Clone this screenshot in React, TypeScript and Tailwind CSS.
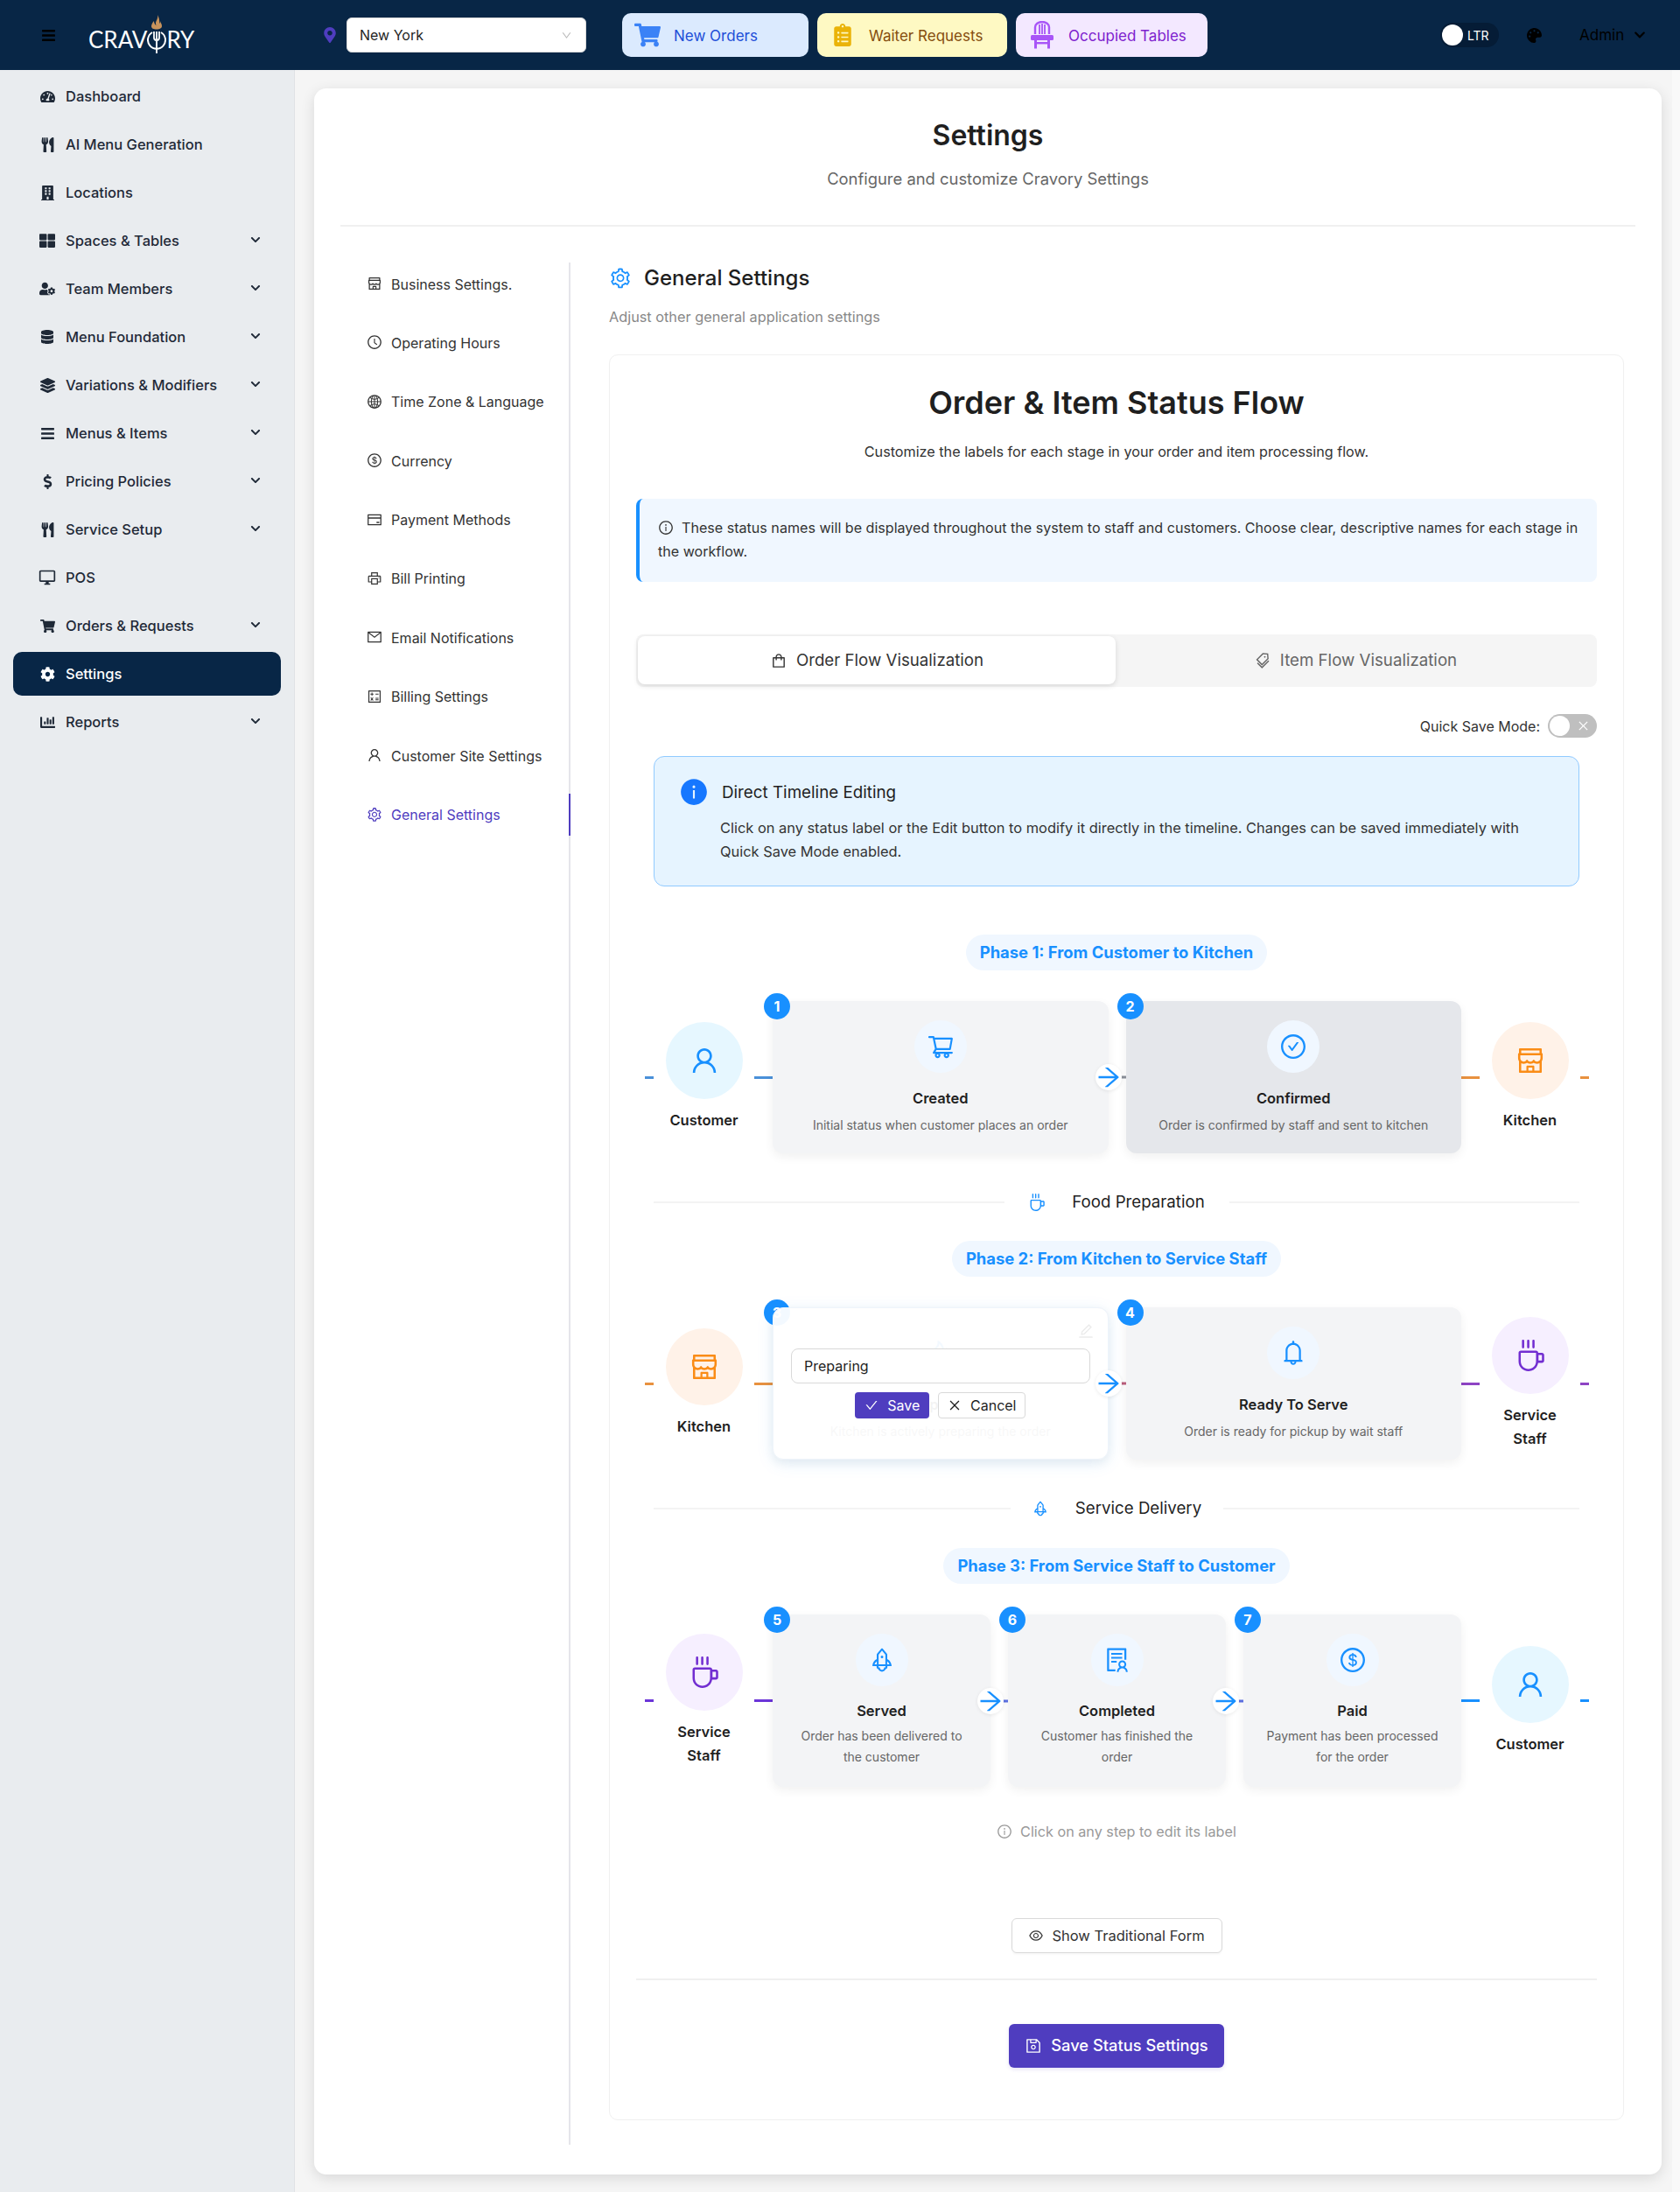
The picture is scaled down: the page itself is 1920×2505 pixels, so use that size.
import React from "react";
import {
  FaTachometerAlt, FaUtensils, FaBuilding, FaThLarge, FaUserCog, FaDatabase, FaLayerGroup, FaBars,
  FaDollarSign, FaShoppingCart, FaCog, FaChartBar, FaPalette, FaMapMarkerAlt, FaClipboardList, FaChevronDown,
} from "react-icons/fa";
import { MdOutlineDesktopWindows } from "react-icons/md";
import {
  AiOutlineShop, AiOutlineClockCircle, AiOutlineGlobal, AiOutlineDollarCircle, AiOutlineCreditCard, AiOutlinePrinter,
  AiOutlineMail, AiOutlineCalculator, AiOutlineUser, AiOutlineSetting, AiOutlineShopping, AiOutlineTags, AiOutlineInfoCircle,
  AiFillInfoCircle, AiOutlineShoppingCart, AiOutlineCheckCircle, AiOutlineCoffee, AiOutlineRocket, AiOutlineBell, AiOutlineSolution,
  AiOutlineDollar, AiOutlineArrowRight, AiOutlineEye, AiOutlineSave, AiOutlineCheck, AiOutlineClose, AiOutlineEdit, AiOutlineFire,
} from "react-icons/ai";
import { AiOutlineDown } from "react-icons/ai";

const sideItems: [React.ReactNode, string, boolean][] = [
  [<FaTachometerAlt size={17} />, "Dashboard", false],
  [<FaUtensils size={17} />, "AI Menu Generation", false],
  [<FaBuilding size={17} />, "Locations", false],
  [<FaThLarge size={18} />, "Spaces & Tables", true],
  [<FaUserCog size={18} />, "Team Members", true],
  [<FaDatabase size={16} />, "Menu Foundation", true],
  [<FaLayerGroup size={17} />, "Variations & Modifiers", true],
  [<FaBars size={17} />, "Menus & Items", true],
  [<FaDollarSign size={17} />, "Pricing Policies", true],
  [<FaUtensils size={17} />, "Service Setup", true],
  [<MdOutlineDesktopWindows size={20} />, "POS", false],
  [<FaShoppingCart size={17} />, "Orders & Requests", true],
  [<FaCog size={17} />, "Settings", false],
  [<FaChartBar size={17} />, "Reports", true],
];

const menuItems: [React.ReactNode, string][] = [
  [<AiOutlineShop size={18} />, "Business Settings."],
  [<AiOutlineClockCircle size={18} />, "Operating Hours"],
  [<AiOutlineGlobal size={18} />, "Time Zone & Language"],
  [<AiOutlineDollarCircle size={18} />, "Currency"],
  [<AiOutlineCreditCard size={18} />, "Payment Methods"],
  [<AiOutlinePrinter size={18} />, "Bill Printing"],
  [<AiOutlineMail size={18} />, "Email Notifications"],
  [<AiOutlineCalculator size={18} />, "Billing Settings"],
  [<AiOutlineUser size={18} />, "Customer Site Settings"],
  [<AiOutlineSetting size={18} />, "General Settings"],
];

function ChairIcon() {
  return (
    <svg width="28" height="32" viewBox="0 0 28 32" fill="none">
      <path d="M6 15V7a8 6 0 0 1 16 0v8" stroke="#a855f7" strokeWidth="2.4" />
      <path d="M11 15V4M14 15V3M17 15V4" stroke="#a855f7" strokeWidth="1.8" />
      <rect x="1" y="16" width="26" height="6" rx="1.5" fill="#a855f7" />
      <path d="M5 22h3v9.500H5zM20 22h3v9.500h-3z" fill="#a855f7" />
      <rect x="5" y="24" width="18" height="2.400" fill="#a855f7" />
    </svg>
  );
}

function LogoMark() {
  return (
    <svg width="22" height="44" viewBox="0 0 22 44" fill="none" className="mt-[-3px] shrink-0">
      <path d="M12 0c1 4-1.500 6-2 9-.2 1 .1 2 .5 3C9 11 8 9.500 8 7 6 9 5 11.500 5 13c0 2.500 2.500 3.500 6 3.500s6-1.200 6-3.700c0-2.500-1.500-3.800-2-5.800 0 1.500-.5 2.500-1 3C14.500 7 14 3 12 0z" fill="#c8935c" />
      <path d="M6 20a10 10 0 1 0 10 0" stroke="#fff" strokeWidth="2" />
      <path d="M8 19v7a3 3 0 0 0 6 0v-7M11 19v25" stroke="#fff" strokeWidth="1.800" />
    </svg>
  );
}

type End = { label: string[]; icon: React.ReactNode; bg: string };
type Step = { n: number; title: string; desc: string[]; icon: React.ReactNode; bg?: string; editing?: boolean };

const userIcon = <AiOutlineUser size={36} className="text-[#1890ff]" />;
const shopIcon = <AiOutlineShop size={36} className="text-[#fa8c16]" />;
const cupIcon = <AiOutlineCoffee size={36} className="text-[#722ed1]" />;

const customer: End = { label: ["Customer"], icon: userIcon, bg: "bg-[#e6f7ff]" };
const kitchen: End = { label: ["Kitchen"], icon: shopIcon, bg: "bg-[#fff2e8]" };
const service: End = { label: ["Service", "Staff"], icon: cupIcon, bg: "bg-[#f6efff]" };

function Endpoint({ end, c1, c2, side }: { end: End; c1: string; c2: string; side: "left" | "right" }) {
  const short = <div className={`h-[3px] w-[10px] ${c1}`} />;
  const long = <div className={`h-[3px] w-[21px] ${c2}`} />;
  return (
    <div className="flex w-[146px] shrink-0 items-center">
      {side === "left" ? short : long}
      <div className="flex w-[115px] flex-col items-center">
        <div className={`flex h-[88px] w-[88px] items-center justify-center rounded-full ${end.bg}`}>{end.icon}</div>
        <div className="mt-[11px] text-center text-[16.5px] font-semibold leading-[27px] text-[#1f1f1f]">
          {end.label.map((l) => (
            <div key={l}>{l}</div>
          ))}
        </div>
      </div>
      {side === "left" ? long : short}
    </div>
  );
}

function Card({ step, arrow, conn }: { step: Step; arrow: boolean; conn: string }) {
  const two = step.desc.length > 1;
  return (
    <div className={`relative flex-1 rounded-[12px] px-[20px] pt-[22px] shadow-[0_4px_12px_rgba(0,0,0,0.06)] ${step.bg ?? "bg-[#f3f4f6]"}`}>
      <div className="absolute left-[-10px] top-[-9px] flex h-[30px] w-[30px] items-center justify-center rounded-full bg-[#1890ff] text-[16px] font-bold text-white">
        {step.n}
      </div>
      <div className="flex flex-col items-center text-center">
        <div className="flex h-[60px] w-[60px] items-center justify-center rounded-full bg-[#f0f7ff] text-[#1890ff]">{step.icon}</div>
        <div className={`text-[16.5px] font-semibold leading-[26px] text-[#1f1f1f] ${two ? "mt-[15px]" : "mt-[16px]"}`}>{step.title}</div>
        <div className={`text-[14px] leading-[24px] text-[#666] ${two ? "mt-[4px]" : "mt-[6px]"}`}>
          {step.desc.map((d) => (
            <div key={d}>{d}</div>
          ))}
        </div>
      </div>
      {step.editing && (
        <div className="absolute inset-0 z-10 rounded-[12px] border border-[#eef4fb] bg-white/95 shadow-[0_4px_20px_rgba(24,144,255,0.1)]">
          <AiOutlineEdit size={20} className="absolute right-[15px] top-[16px] text-[#ececec]" />
          <div className="absolute left-[20px] right-[20px] top-[46px] flex h-[40px] items-center rounded-[8px] border border-[#d9d9d9] bg-white pl-[14px] text-[16px] text-[#1f1f1f]">
            Preparing
          </div>
          <div className="absolute left-0 right-0 top-[96px] flex justify-center gap-[10px]">
            <div className="flex h-[30px] w-[85px] items-center justify-center gap-[10px] rounded-[4px] bg-[#4f3dbf] text-[16px] text-white">
              <AiOutlineCheck size={16} />
              Save
            </div>
            <div className="flex h-[30px] w-[100px] items-center justify-center gap-[10px] rounded-[4px] border border-[#d9d9d9] bg-white text-[16px] text-[#1f1f1f]">
              <AiOutlineClose size={16} />
              Cancel
            </div>
          </div>
        </div>
      )}
      {arrow && (
        <>
          <div className={`absolute right-[-20px] top-1/2 z-20 h-[3px] w-[6px] -translate-y-1/2 ${conn}`} />
          <div className="absolute right-[-15px] top-1/2 z-20 flex h-[30px] w-[30px] -translate-y-1/2 items-center justify-center rounded-full bg-white text-[#1890ff] shadow-[0_1px_4px_rgba(0,0,0,0.08)]">
            <AiOutlineArrowRight size={32} className="shrink-0" />
          </div>
        </>
      )}
    </div>
  );
}

function Row({
  left, right, steps, h, lc, rc, conn, className,
}: {
  left: End; right: End; steps: Step[]; h: string; lc: [string, string]; rc: [string, string]; conn: string; className: string;
}) {
  return (
    <div className={`ml-[10px] flex w-[1079px] items-center ${className}`}>
      <Endpoint end={left} c1={lc[0]} c2={lc[1]} side="left" />
      <div className={`flex flex-1 gap-[20px] ${h}`}>
        {steps.map((s, i) => (
          <Card key={s.n} step={s} arrow={i < steps.length - 1} conn={conn} />
        ))}
      </div>
      <Endpoint end={right} c1={rc[1]} c2={rc[0]} side="right" />
    </div>
  );
}

function Pill({ children, className }: { children: string; className: string }) {
  return (
    <div className={`flex justify-center ${className}`}>
      <div className="flex h-[41px] items-center rounded-full bg-[#f0f7ff] px-[16px] text-[18.4px] font-bold text-[#1890ff]">{children}</div>
    </div>
  );
}

function Divider({ icon, label, className, w }: { icon: React.ReactNode; label: string; className: string; w: string }) {
  return (
    <div className={`mx-[20px] flex items-center ${className}`}>
      <div className="h-[2px] flex-1 bg-[#f3f3f3]" />
      <div className={`flex items-center justify-center gap-[30px] text-[18.7px] text-[#1f1f1f] ${w}`}>
        <span className="text-[#1890ff]">{icon}</span>
        {label}
      </div>
      <div className="h-[2px] flex-1 bg-[#f3f3f3]" />
    </div>
  );
}

export default function App() {
  return (
    <div className="h-[2505px] w-[1920px] overflow-hidden bg-[#f5f5f5] font-[Inter,sans-serif] text-[#1f1f1f]">
      <header className="flex h-[80px] items-center bg-[#082646]">
        <FaBars size={17} className="ml-[47px] text-black" />
        <div className="ml-[37px] flex h-[80px] w-[122px] items-center font-[Lato,sans-serif] text-[26px] font-normal leading-none text-white">
          <span className="mt-[10px]">CRAV</span>
          <LogoMark />
          <span className="mt-[10px]">RY</span>
        </div>
        <FaMapMarkerAlt size={18} className="ml-[145px] text-[#4f3dbf]" />
        <div className="ml-[10px] flex h-[40px] w-[274px] items-center justify-between rounded-[6px] border border-[#d9d9d9] bg-white pl-[14px] pr-[15px] text-[16px] text-[#1f1f1f]">
          New York
          <AiOutlineDown size={13} className="text-[#bbb]" />
        </div>
        <div className="ml-[41px] flex h-[50px] w-[213px] items-center gap-[15px] rounded-[10px] bg-[#dbeafe] pl-[14px] text-[17px] text-[#1d4ed8]">
          <FaShoppingCart size={30} className="text-[#3b82f6]" />
          <span className="pt-[3px]">New Orders</span>
        </div>
        <div className="ml-[10px] flex h-[50px] w-[217px] items-center gap-[17px] rounded-[10px] bg-[#fef9c3] pl-[16px] text-[17px] text-[#854d0e]">
          <FaClipboardList size={26} className="text-[#eab308]" />
          <span className="pt-[3px]">Waiter Requests</span>
        </div>
        <div className="ml-[10px] flex h-[50px] w-[219px] items-center gap-[16px] rounded-[10px] bg-[#f3e8ff] pl-[16px] text-[17px] text-[#7e22ce]">
          <ChairIcon />
          <span className="pt-[3px]">Occupied Tables</span>
        </div>
        <div className="ml-[266px] flex h-[28px] w-[67px] items-center gap-[5px] rounded-full bg-[#051c36] pl-[2px] text-[14px] text-white">
          <div className="h-[24px] w-[24px] rounded-full bg-white" />
          LTR
        </div>
        <FaPalette size={17} className="ml-[32px] text-black" />
        <div className="ml-[43px] pt-[2px] text-[17px] text-black">Admin</div>
        <FaChevronDown size={14} className="ml-[11px] text-black" />
      </header>

      <div className="flex h-[2425px]">
        <aside className="w-[337px] shrink-0 border-r border-[#dfe2e5] bg-[#e9ecef] px-[15px] pt-[5px]">
          <div className="flex flex-col gap-[5px]">
            {sideItems.map(([icon, label, chevron]) => {
              const active = label === "Settings";
              return (
                <div
                  key={label}
                  className={`flex h-[50px] items-center rounded-[10px] pl-[29px] pr-[23px] text-[16.5px] font-medium ${active ? "bg-[#082646] text-white" : "text-[#1f2937]"}`}
                >
                  <span className="flex w-[20px] justify-center">{icon}</span>
                  <span className="ml-[11px] flex-1">{label}</span>
                  {chevron && <FaChevronDown size={12} className="mt-[-2px] text-[#1f2937]" />}
                </div>
              );
            })}
          </div>
        </aside>

        <main className="flex flex-1 pl-[22px] pt-[21px]">
          <div className="h-[2384px] w-[1540px] shrink-0 rounded-[14px] bg-white px-[30px] shadow-[0_4px_16px_rgba(0,0,0,0.12)]">
            <div className="h-[158px] border-b-2 border-[#f0f0f0] pt-[33px] text-center">
              <div className="text-[32px] font-semibold leading-[42px] text-[#1f1f1f]">Settings</div>
              <div className="mt-[14px] text-[18.4px] leading-[28px] text-[#666]">Configure and customize Cravory Settings</div>
            </div>

            <div className="flex pt-[41px]">
              <nav className="relative flex h-[2151px] w-[263px] shrink-0 flex-col gap-[19.4px] border-r-2 border-[#e5e5ea]">
                {menuItems.map(([icon, label]) => {
                  const active = label === "General Settings";
                  return (
                    <div
                      key={label}
                      className={`relative flex h-[48px] items-center gap-[10px] pl-[30px] text-[16px] ${active ? "text-[#4f3dbf]" : "text-[#333]"}`}
                    >
                      {icon}
                      <span className="pt-[1px]">{label}</span>
                      {active && <div className="absolute right-[-2px] top-0 h-[48px] w-[2px] bg-[#4f3dbf]" />}
                    </div>
                  );
                })}
              </nav>

              <section className="w-[1204px] shrink-0 pl-[44px]">
                <div className="flex h-[36px] items-center gap-[14px] text-[24px] font-medium leading-[36px] text-[#1f1f1f]">
                  <AiOutlineSetting size={26} className="text-[#1890ff]" />
                  General Settings
                </div>
                <div className="mt-[13px] text-[16.3px] leading-[26px] text-[#888]">Adjust other general application settings</div>

                <div className="mt-[30px] h-[2018px] rounded-[10px] border border-[#f0f0f0] px-[30px]">
                  <h2 className="pt-[27px] text-center text-[36px] font-semibold leading-[54px] text-[#1f1f1f]">Order &amp; Item Status Flow</h2>
                  <p className="mt-[16px] text-center text-[16.2px] leading-[26px] text-[#333]">
                    Customize the labels for each stage in your order and item processing flow.
                  </p>

                  <div className="mt-[41px] h-[95px] rounded-[8px] border-l-4 border-[#1890ff] bg-[#f0f7ff] pl-[21px] pr-[16px] pt-[20px] text-[16.1px] leading-[27px] text-[#333]">
                    <AiOutlineInfoCircle size={18} className="mr-[9px] inline-block align-[-3px]" />
                    These status names will be displayed throughout the system to staff and customers. Choose clear, descriptive names for each stage in the workflow.
                  </div>

                  <div className="mt-[60px] flex h-[60px] rounded-[8px] bg-[#f5f5f5] p-[2px]">
                    <div className="flex h-[55px] w-[546px] items-center justify-center gap-[10px] rounded-[8px] bg-white text-[18.7px] text-[#333] shadow-[0_2px_6px_rgba(0,0,0,0.12)]">
                      <AiOutlineShopping size={20} />
                      <span className="pt-[2px]">Order Flow Visualization</span>
                    </div>
                    <div className="flex h-[55px] flex-1 items-center justify-center gap-[10px] text-[18.7px] text-[#666]">
                      <AiOutlineTags size={20} />
                      <span className="pt-[2px]">Item Flow Visualization</span>
                    </div>
                  </div>

                  <div className="mt-[31px] flex h-[27px] items-center justify-end gap-[9px] text-[16px] text-[#333]">
                    Quick Save Mode:
                    <div className="flex h-[27px] w-[56px] items-center justify-between rounded-full bg-[#bfbfbf] pl-[2px] pr-[8px] text-white">
                      <div className="h-[23px] w-[23px] rounded-full bg-white" />
                      <AiOutlineClose size={15} />
                    </div>
                  </div>

                  <div className="mx-[20px] mt-[21px] h-[149px] rounded-[12px] border border-[#91caff] bg-[#e6f4ff] pl-[30px] pr-[30px] pt-[25px]">
                    <div className="flex h-[30px] items-center gap-[15px] text-[18.8px] text-[#1f1f1f]">
                      <AiFillInfoCircle size={34} className="-ml-[2px] text-[#1677ff]" />
                      <span className="pt-[2px]">Direct Timeline Editing</span>
                    </div>
                    <div className="mt-[13px] pl-[45px] text-[16.4px] leading-[27px] text-[#333]">
                      Click on any status label or the Edit button to modify it directly in the timeline. Changes can be saved immediately with
                      <br />
                      Quick Save Mode enabled.
                    </div>
                  </div>

                  <Pill className="mt-[55px]">Phase 1: From Customer to Kitchen</Pill>
                  <Row
                    className="mt-[35px]"
                    h="h-[174px]"
                    left={customer}
                    right={kitchen}
                    lc={["bg-[#4a90d9]", "bg-[#4a90d9]"]}
                    rc={["bg-[#e8913f]", "bg-[#e8913f]"]}
                    conn="bg-[#8a8f98]"
                    steps={[
                      { n: 1, title: "Created", desc: ["Initial status when customer places an order"], icon: <AiOutlineShoppingCart size={32} /> },
                      { n: 2, title: "Confirmed", desc: ["Order is confirmed by staff and sent to kitchen"], icon: <AiOutlineCheckCircle size={32} />, bg: "bg-[#e5e7eb]" },
                    ]}
                  />
                  <Divider className="mt-[42px]" w="w-[257px]" icon={<AiOutlineCoffee size={20} />} label="Food Preparation" />
                  <Pill className="mt-[30px]">Phase 2: From Kitchen to Service Staff</Pill>
                  <Row
                    className="mt-[35px]"
                    h="h-[174px]"
                    left={kitchen}
                    right={service}
                    lc={["bg-[#e8913f]", "bg-[#e8913f]"]}
                    rc={["bg-[#8e44c4]", "bg-[#8e44c4]"]}
                    conn="bg-[#b85c7a]"
                    steps={[
                      { n: 3, title: "Preparing", desc: ["Kitchen is actively preparing the order"], icon: <AiOutlineFire size={32} />, editing: true },
                      { n: 4, title: "Ready To Serve", desc: ["Order is ready for pickup by wait staff"], icon: <AiOutlineBell size={32} /> },
                    ]}
                  />
                  <Divider className="mt-[42px]" w="w-[243px]" icon={<AiOutlineRocket size={20} />} label="Service Delivery" />
                  <Pill className="mt-[31px]">Phase 3: From Service Staff to Customer</Pill>
                  <Row
                    className="mt-[35px]"
                    h="h-[197px]"
                    left={service}
                    right={customer}
                    lc={["bg-[#6b35d9]", "bg-[#6b35d9]"]}
                    rc={["bg-[#1890ff]", "bg-[#1890ff]"]}
                    conn="bg-[#5b6fe0]"
                    steps={[
                      { n: 5, title: "Served", desc: ["Order has been delivered to", "the customer"], icon: <AiOutlineRocket size={32} /> },
                      { n: 6, title: "Completed", desc: ["Customer has finished the", "order"], icon: <AiOutlineSolution size={32} /> },
                      { n: 7, title: "Paid", desc: ["Payment has been processed", "for the order"], icon: <AiOutlineDollar size={32} /> },
                    ]}
                  />

                  <div className="mt-[38px] flex h-[26px] items-center justify-center gap-[9px] text-[16.2px] text-[#999]">
                    <AiOutlineInfoCircle size={18} />
                    Click on any step to edit its label
                  </div>

                  <div className="mt-[86px] flex justify-center">
                    <div className="flex h-[40px] w-[241px] items-center justify-center gap-[9px] rounded-[6px] border border-[#d9d9d9] bg-white text-[16.5px] text-[#333] shadow-[0_2px_2px_rgba(0,0,0,0.03)]">
                      <AiOutlineEye size={18} />
                      Show Traditional Form
                    </div>
                  </div>

                  <div className="mt-[29px] h-[2px] bg-[#f0f0f0]" />

                  <div className="mt-[50px] flex justify-center">
                    <div className="flex h-[50px] w-[246px] items-center justify-center gap-[10px] rounded-[6px] bg-[#4f3dbf] text-[18.3px] font-medium text-white shadow-[0_2px_4px_rgba(79,61,191,0.15)]">
                      <AiOutlineSave size={20} />
                      Save Status Settings
                    </div>
                  </div>
                </div>
              </section>
            </div>
          </div>
          <div className="ml-auto mt-[-21px] h-[2425px] w-[9px] bg-[#f9f9f9]" />
        </main>
      </div>
    </div>
  );
}
